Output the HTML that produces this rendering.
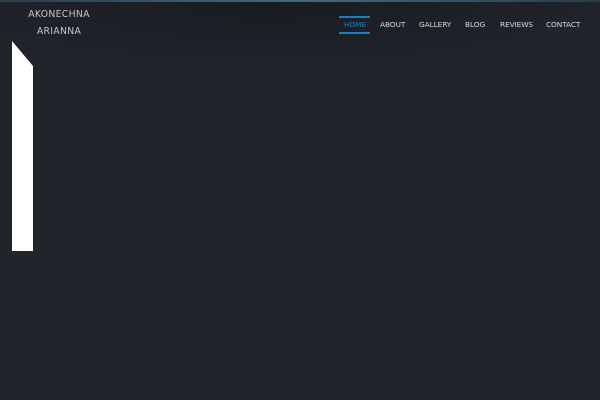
<!DOCTYPE html>
<html><head><style>
html,body{margin:0;padding:0}
body{width:600px;height:400px;background:#20242b;position:relative;overflow:hidden;font-family:"DejaVu Sans","Liberation Sans",sans-serif}
.top{position:absolute;left:0;top:0;width:600px;height:2px;background:linear-gradient(90deg,#2a3d4c,#3d6a88 50%,#2a3d4c)}
.hdr{position:absolute;left:0;top:2px;width:600px;height:70px;background:radial-gradient(ellipse 60% 100% at 45% 0%,#181b20 0%,#1c1f25 40%,rgba(32,36,43,0) 100%)}
.logo{position:absolute;left:22px;top:6px;width:74px;text-align:center;color:#c5c8cc;font-size:9.3px;line-height:17px;letter-spacing:.3px}
.nav{position:absolute;top:20px;font-size:7.4px;color:#d7dadd;letter-spacing:-0.1px}
.home{color:#1a7fc0}
.ln{position:absolute;left:339px;width:31px;height:1.5px;background:#1a7fc0}
</style></head><body>
<div class="hdr"></div><div class="top"></div>
<div class="logo">AKONECHNA<br>ARIANNA</div>
<div class="ln" style="top:16px"></div><div class="ln" style="top:32px"></div>
<div class="nav home" style="left:344px">HOME</div>
<div class="nav" style="left:380px">ABOUT</div>
<div class="nav" style="left:419px">GALLERY</div>
<div class="nav" style="left:465px">BLOG</div>
<div class="nav" style="left:500px">REVIEWS</div>
<div class="nav" style="left:546px">CONTACT</div>
<svg style="position:absolute;left:0;top:0" width="600" height="400"><polygon points="12,41 33,66 33,251 12,251" fill="#fff"/></svg>
</body></html>
